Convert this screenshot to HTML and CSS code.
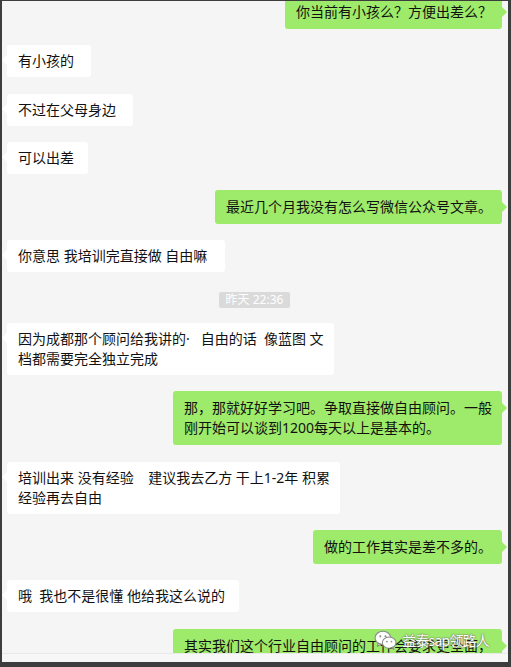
FILE: index.html
```html
<!DOCTYPE html>
<html lang="zh-CN">
<head>
    <meta charset="UTF-8">
    <meta name="viewport" content="width=device-width, initial-scale=1.0">
    <title>聊天记录</title>
    <link rel="stylesheet" href="styles.css">
</head>
<body>
    <!-- 外框 -->
    <div class="frame">
        <div class="window">
            <!-- 聊天内容 -->
            <div class="chat">
                <div class="chat-list">
                    <div class="row me"><div class="bubble">你当前有小孩么？方便出差么？</div></div>
                    <div class="row"><div class="bubble">有小孩的&nbsp;&nbsp;</div></div>
                    <div class="row"><div class="bubble">不过在父母身边&nbsp;&nbsp;</div></div>
                    <div class="row"><div class="bubble">可以出差&nbsp;</div></div>
                    <div class="row me"><div class="bubble">最近几个月我没有怎么写微信公众号文章。</div></div>
                    <div class="row"><div class="bubble">你意思 我培训完直接做 自由嘛&nbsp;&nbsp;</div></div>

                    <div class="time"><span>昨天 22:36</span></div>

                    <div class="row"><div class="bubble">因为成都那个顾问给我讲的·&nbsp;&nbsp; 自由的话&nbsp; 像蓝图 文<br>档都需要完全独立完成</div></div>
                    <div class="row me"><div class="bubble">那，那就好好学习吧。争取直接做自由顾问。一般<br>刚开始可以谈到1200每天以上是基本的。</div></div>
                    <div class="row"><div class="bubble">培训出来 没有经验&nbsp;&nbsp;&nbsp; 建议我去乙方 干上1-2年 积累<br>经验再去自由</div></div>
                    <div class="row me"><div class="bubble">做的工作其实是差不多的。</div></div>
                    <div class="row"><div class="bubble">哦&nbsp; 我也不是很懂 他给我这么说的&nbsp;</div></div>
                    <div class="row me"><div class="bubble">其实我们这个行业自由顾问的工作会要求更全面，<br>需要自己对接客户和处理问题。</div></div>
                </div>
            </div>
            <div class="footer"></div>

            <!-- 公众号水印 -->
            <div class="watermark">
                <svg class="wm-icon" width="23" height="20" viewBox="0 0 22 19">
                    <ellipse cx="8.5" cy="7.5" rx="7.5" ry="6.3" fill="#fff" stroke="#8a8a8a" stroke-width="1"/>
                    <path d="M4 12.5 L3.2 15.5 L6.6 13.5 Z" fill="#fff" stroke="#8a8a8a" stroke-width="1" stroke-linejoin="round"/>
                    <ellipse cx="14.5" cy="12" rx="6.5" ry="5.4" fill="#fff" stroke="#8a8a8a" stroke-width="1"/>
                    <path d="M18 16.2 L19 18.4 L16.2 17 Z" fill="#fff" stroke="#8a8a8a" stroke-width="1" stroke-linejoin="round"/>
                    <circle cx="6" cy="6" r="1" fill="#8a8a8a"/>
                    <circle cx="11" cy="6" r="1" fill="#8a8a8a"/>
                    <circle cx="12.3" cy="11" r="0.8" fill="#8a8a8a"/>
                    <circle cx="16.7" cy="11" r="0.8" fill="#8a8a8a"/>
                </svg>
                <span class="wm-text">益泰sap领路人</span>
            </div>
        </div>
    </div>
</body>
</html>
```

FILE: styles.css
```css
/* 页面基础 */
body {
    margin: 0;
    font-family: "Noto Sans", "Noto Sans CJK SC", sans-serif;
    font-size: 14px;
    color: #111;
}

/* 深色外框 */
.frame {
    height: 100vh;
    box-sizing: border-box;
    padding: 1px 3px 5px 2px;
    background-color: #3d3d3d;
}

.window {
    position: relative;
    height: 100%;
    display: flex;
    flex-direction: column;
    background-color: #f5f5f5;
}

/* 聊天区域 */
.chat {
    flex: 1;
    overflow: hidden;
    padding: 0 6px 0 5px;
}

.chat-list {
    display: flex;
    flex-direction: column;
    gap: 16.3px;
    margin-top: -6px;
}

.row {
    display: flex;
}

.row.me {
    justify-content: flex-end;
}

/* 气泡 */
.bubble {
    position: relative;
    padding: 6px 10px 6px 11px;
    line-height: 20px;
    white-space: nowrap;
    background-color: #fff;
    border-radius: 3px;
}

.bubble::before {
    content: "";
    position: absolute;
    top: 10px;
    left: -5px;
    border-top: 5px solid transparent;
    border-bottom: 5px solid transparent;
    border-right: 5px solid #fff;
}

.row.me .bubble {
    padding-top: 7px;
    padding-bottom: 7px;
    background-color: #9eea6a;
}

.row.me .bubble::before {
    top: 12px;
    left: auto;
    right: -5px;
    border-right: none;
    border-left: 5px solid #9eea6a;
}

/* 时间 */
.time {
    display: flex;
    justify-content: center;
    margin: 3px 0 -1px;
}

.time span {
    padding: 0 7px;
    font-size: 12px;
    line-height: 16px;
    color: #fff;
    background-color: #dadada;
    border-radius: 2px;
}

/* 底部条 */
.footer {
    height: 8px;
    border-top: 1px solid #e9e9e9;
    background-color: #f7f7f7;
}

/* 水印 */
.watermark {
    position: absolute;
    right: 19px;
    bottom: 12px;
    display: flex;
    align-items: center;
    gap: 5px;
}

.wm-text {
    font-size: 14px;
    color: #fff;
    text-shadow: 0 0 1px #555, 0 0 2px #777;
    letter-spacing: -0.8px;
}
```
